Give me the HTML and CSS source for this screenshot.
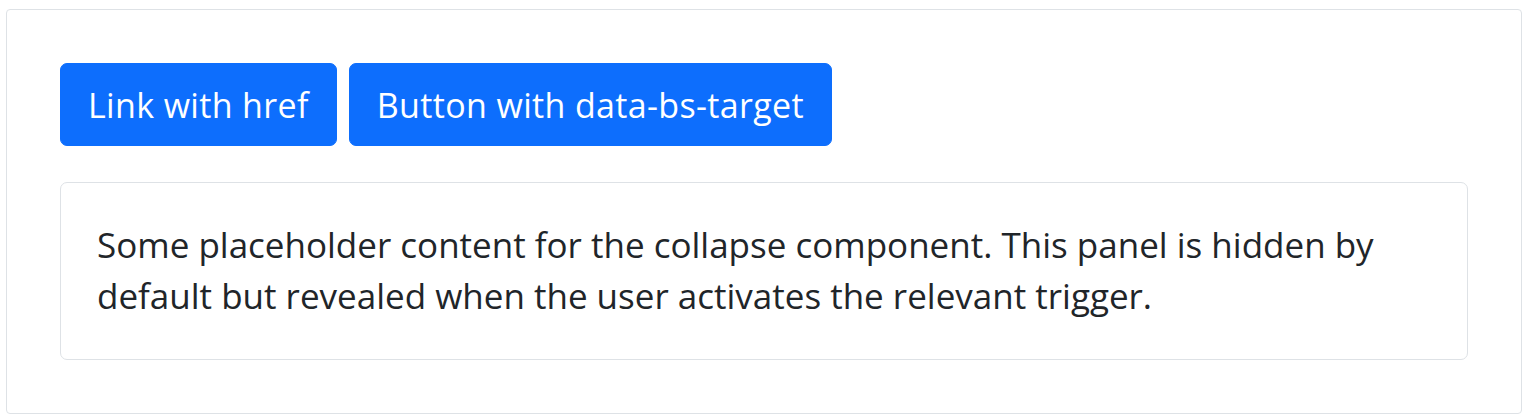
FILE: index.html
```html
<!DOCTYPE html>
<html lang="en">
<head>
<meta charset="utf-8">
<title>Collapse</title>
<link rel="stylesheet" href="styles.css">
</head>
<body>
<div class="frame">
  <div class="actions">
    <a class="btn" href="#collapseExample">Link with href</a>
    <button class="btn" type="button">Button with data-bs-target</button>
  </div>
  <div class="panel">
    <div class="panel-body">Some placeholder content for the collapse component. This panel is hidden by default but revealed when the user activates the relevant trigger.</div>
  </div>
</div>
</body>
</html>
```

FILE: styles.css
```css
* { box-sizing: border-box; }
html, body { margin: 0; padding: 0; background: #fff; }
body {
  font-family: "Open Sans", "Noto Sans CJK KR", sans-serif;
  color: #212529;
  padding: 9px 8px 5px 6px;
}
.frame {
  border: 1px solid #dee2e6;
  border-radius: 4px;
  padding: 53px 53px 53px 53px;
  height: 405px;
}
.actions {
  display: flex;
  gap: 12px;
}
.btn {
  display: inline-flex;
  align-items: center;
  justify-content: center;
  height: 83px;
  padding: 0 27px;
  background: #0d6efd;
  color: #fff;
  border: 1px solid #0d6efd;
  border-radius: 7px;
  font-family: inherit;
  font-size: 34px;
  letter-spacing: 0.35px;
  text-decoration: none;
  line-height: 1;
}
.panel {
  margin-top: 36px;
  border: 1px solid #dee2e6;
  border-radius: 7px;
  height: 178px;
  padding: 36px 36px;
}
.panel-body {
  font-size: 35px;
  line-height: 51px;
}
```
